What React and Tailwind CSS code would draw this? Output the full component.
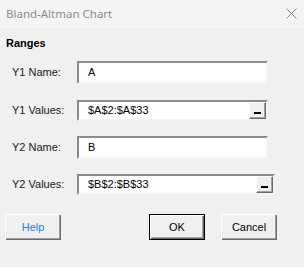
import React from 'react'

const font = { fontFamily: '"Liberation Sans", Arial, sans-serif' }

function Field({ label, value, picker, wide, tall, className }) {
  return (
    <div className={`flex items-center pl-[12px] ${className}`}>
      <div className="w-[65px] text-[11px] text-[#1a1a1a] leading-none">{label}</div>
      <div
        className={`relative flex items-center bg-white border-2 border-t-[#8a8a8a] border-l-[#8a8a8a] border-r-[#f4f4f4] border-b-[#f4f4f4] ${wide ? 'w-[198px]' : 'w-[191px]'} ${tall ? 'h-[23px]' : 'h-[21px]'}`}
      >
        <span className="pl-[9px] text-[11px] text-black leading-none">{value}</span>
        {picker && (
          <div className="absolute right-0 top-0 bottom-0 w-[17px] bg-[#f0f0f0] border border-t-white border-l-white border-r-[#696969] border-b-[#696969] shadow-[inset_-1px_-1px_0_#a0a0a0] flex items-end justify-center pb-[4px]">
            <div className="w-[7px] h-[2px] bg-black" />
          </div>
        )}
      </div>
    </div>
  )
}

function WinButton({ children, primary, blue, className }) {
  return (
    <div
      className={`w-[56px] h-[26px] flex items-center justify-center text-[11px] bg-[#f0f0f0] ${
        primary
          ? 'border border-black shadow-[inset_1px_1px_0_#ffffff,inset_-1px_-1px_0_#696969,inset_-2px_-2px_0_#a0a0a0]'
          : 'shadow-[inset_1px_1px_0_#ffffff,inset_-1px_-1px_0_#696969,inset_-2px_-2px_0_#a0a0a0]'
      } ${blue ? 'text-[#1a7fe0]' : 'text-black'} ${className}`}
    >
      {children}
    </div>
  )
}

export default function App() {
  return (
    <div className="w-[304px] h-[267px] bg-[#f0f0f0] overflow-hidden" style={font}>
      <div className="h-[28px] bg-[#f4f4f4] flex items-center justify-between pl-[6px] pr-[7px]">
        <span className="text-[11.5px] text-[#8c8c8c]" style={{ fontFamily: '"Noto Sans", "Open Sans", sans-serif' }}>
          Bland-Altman Chart
        </span>
        <svg width="11" height="11" viewBox="0 0 11 11" className="mb-[1px]">
          <path d="M0.5 0.5 L10.5 10.5 M10.5 0.5 L0.5 10.5" stroke="#8c8c8c" strokeWidth="1" />
        </svg>
      </div>
      <div className="pl-[6px] pt-[10px] text-[11px] font-bold text-black leading-none">Ranges</div>
      <Field className="mt-[12px]" label="Y1 Name:" value="A" tall />
      <Field className="mt-[16px]" label="Y1 Values:" value="$A$2:$A$33" picker />
      <Field className="mt-[15px]" label="Y2 Name:" value="B" tall />
      <Field className="mt-[15px]" label="Y2 Values:" value="$B$2:$B$33" picker wide />
      <div className="flex mt-[19px] pl-[5px]">
        <WinButton blue>Help</WinButton>
        <WinButton primary className="ml-[88px]">OK</WinButton>
        <WinButton className="ml-[16px]">Cancel</WinButton>
      </div>
    </div>
  )
}
